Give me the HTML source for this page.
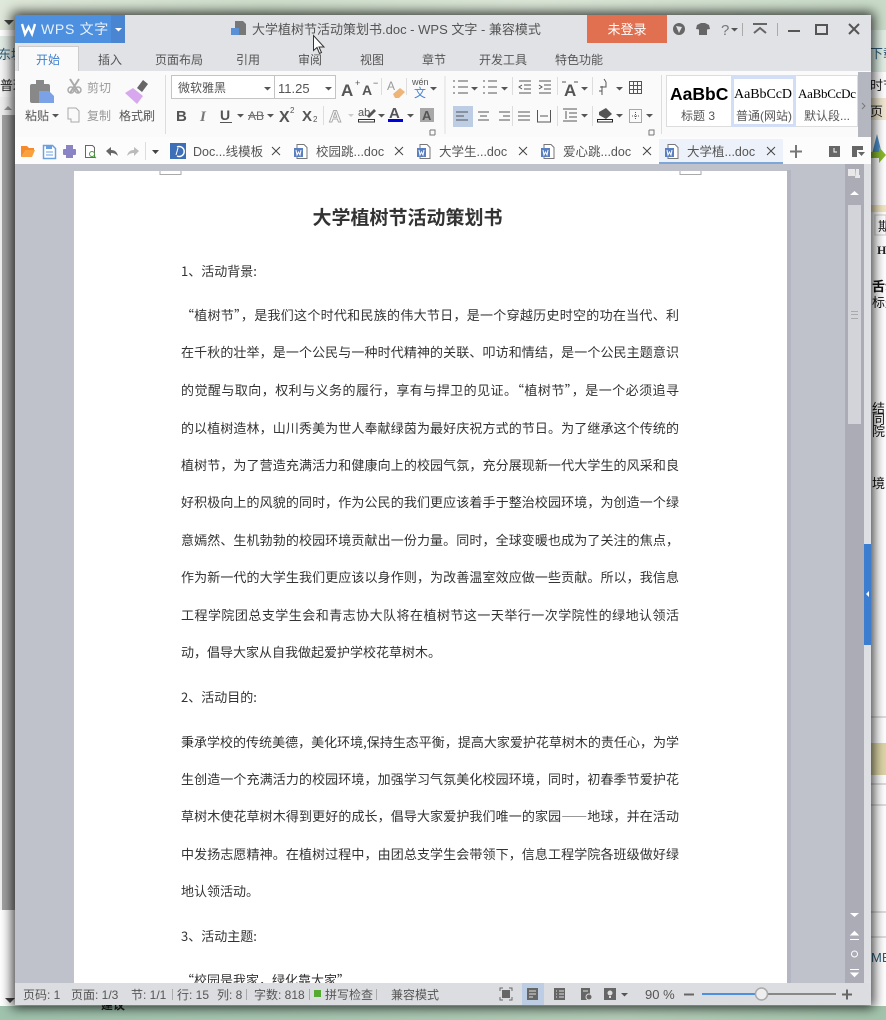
<!DOCTYPE html>
<html lang="zh"><head><meta charset="utf-8"><title>WPS 文字</title>
<style>
html,body{margin:0;padding:0;width:886px;height:1020px;overflow:hidden;background:#fff}
#bg{position:absolute;left:0;top:0;width:886px;height:1020px;overflow:hidden}
#win{position:absolute;left:15px;top:15px;width:856px;height:990px;background:#e1e2e6;box-shadow:0 0 11px 3px rgba(0,0,0,.75)}
svg{position:absolute;left:0;top:0}
text{font-family:"Liberation Sans","Noto Sans CJK SC",sans-serif;fill:#555;font-size:12px}
.b text{fill:#333;font-size:13px;font-family:"Noto Sans CJK SC","Liberation Sans",sans-serif}
.t{font-size:13px}
</style></head><body>
<div id="bg">
<svg width="886" height="1020">
<defs>
<linearGradient id="wt" x1="0" x2="1"><stop offset="0" stop-color="#dfe8da"/><stop offset=".3" stop-color="#cfdfcc"/><stop offset=".6" stop-color="#dce7d8"/><stop offset="1" stop-color="#c9dbc8"/></linearGradient>
<linearGradient id="wb" x1="0" x2="1"><stop offset="0" stop-color="#9fc3ad"/><stop offset=".4" stop-color="#a9c8b2"/><stop offset=".7" stop-color="#b3cdb8"/><stop offset="1" stop-color="#a3c4ac"/></linearGradient>
</defs>
<rect width="886" height="1020" fill="#fff"/>
<rect width="886" height="30" fill="url(#wt)"/>
<rect y="1006" width="886" height="14" fill="url(#wb)"/>
<rect x="0" y="36" width="15" height="25" fill="#e3ebe6"/>
<rect x="0" y="60" width="15" height="37" fill="#f5f5f5"/>
<rect x="0" y="97" width="15" height="813" fill="#f0f0f0"/>
<rect x="2" y="115" width="13" height="795" fill="#a2a2a2"/>
<path d="M4 110l4-4 4 4z" fill="#999"/>
<path d="M4 20h10l-5 5z" fill="#444"/>
<path d="M5 998h10l-5 5z" fill="#444"/>
<text x="-2" y="59" style="fill:#2d5c78;font-size:13px">东坡</text>
<text x="0" y="90" style="fill:#222;font-size:13px">普理</text>
<rect x="871" y="30" width="15" height="42" fill="#dfeee4"/>
<rect x="871" y="98" width="15" height="22" fill="#f1e8d0"/>
<rect x="871" y="205" width="15" height="7" fill="#f1e6c0"/>
<rect x="871" y="743" width="15" height="32" fill="#ddd6a8"/>
<text x="870" y="58" style="fill:#2d5c78;font-size:13px">下载</text>
<text x="870" y="90" style="fill:#222;font-size:13px">时节</text>
<text x="870" y="116" style="fill:#222;font-size:13px">页</text>
<path d="M871 158l6-24 6 24z" fill="#4b8fc9"/><path d="M870 152h9v-5l7 8-7 8v-5h-9z" fill="#8ab92c"/>
<rect x="875" y="215" width="11" height="20" fill="#fff" stroke="#ccc"/>
<text x="878" y="231" style="fill:#222;font-size:13px">期</text>
<text x="877" y="254" style="fill:#222;font-size:12px;font-weight:bold;font-family:'Liberation Serif',serif">H</text>
<g style="font-size:13px"><text x="872" y="291" style="fill:#111;font-size:13px;font-weight:bold">舌动</text><text x="872" y="307" style="fill:#111;font-size:13px">标题</text>
<text x="872" y="413" style="fill:#111;font-size:13px">结</text><text x="872" y="424" style="fill:#111;font-size:13px">同</text><text x="872" y="436" style="fill:#111;font-size:13px">院</text><text x="872" y="488" style="fill:#111;font-size:13px">境，</text><text x="871" y="962" style="fill:#2d5c78;font-size:13px">MB</text></g>
<path d="M871 717h15M871 784h15M871 805h15M871 912h15M871 937h15" stroke="#bbb"/>
<text x="101" y="1009" style="fill:#222;font-size:12px;font-weight:bold">建议</text>
</svg>
<div id="win"></div>
<svg width="886" height="1020">
<defs>
<g id="dc"><path d="M3 .5h7l3 3v11H3z" fill="#fff" stroke="#777"/><rect x="0" y="4" width="9" height="9" fill="#5a7fc0"/><path d="M2 6l1 5 1.500-3L6 11l1-5" stroke="#fff" fill="none"/></g>
<path id="x" d="M0 0l8 8M8 0L0 8" stroke="#444" fill="none"/>
<path id="ar" d="M0 0h7l-3.500 3.500z" fill="#555"/>
</defs>
<!-- title bar -->
<rect x="15" y="15" width="110" height="28" fill="#4d90e0"/><rect x="111" y="15" width="14" height="28" fill="#4a85d2"/>
<path d="M22 24l3 10 3.500-7 3.500 7 3-10" stroke="#fff" stroke-width="2.400" fill="none"/>
<text x="41" y="34" style="fill:#e8f0fb;font-size:14px;letter-spacing:.7px">WPS 文字</text>
<path d="M115 28h7l-3.500 3.500z" fill="#fff"/>
<path d="M235 21h8l3 3v11h-11z" fill="#777"/><rect x="231" y="28" width="8" height="7" fill="#5b8fd6"/>
<text x="252" y="34" class="t" style="font-size:13px;fill:#555">大学植树节活动策划书.doc - WPS 文字 - 兼容模式</text>
<rect x="587" y="15" width="80" height="28" fill="#e07050"/>
<text x="627" y="34" text-anchor="middle" style="fill:#fff;font-size:13px">未登录</text>
<circle cx="679" cy="29" r="6" fill="#666"/><path d="M676 26l6 1-3 6z" fill="#e1e2e6"/>
<path d="M697 25l4-2h4l4 2 1 4-3 .5V35h-8v-5.500L696 29z" fill="#666"/>
<text x="721" y="35" style="font-size:15px;fill:#777">?</text>
<use href="#ar" x="731" y="28"/>
<path d="M742.500 23v13M777.500 23v13" stroke="#aaa"/>
<path d="M753 24h14M754 33l6-5 6 5" stroke="#666" stroke-width="2" fill="none"/>
<path d="M788 31h12" stroke="#555" stroke-width="2"/>
<rect x="816" y="25" width="11" height="9" stroke="#555" stroke-width="2" fill="none"/>
<path d="M849 24l10 10M859 24l-10 10" stroke="#555" stroke-width="2"/>
<!-- tabs -->
<path d="M18.500 71V46.500h60V71" fill="#fafafa" stroke="#ccc"/>
<g text-anchor="middle">
<text x="48" y="64" style="fill:#3e80cc">开始</text>
<text x="110" y="64">插入</text><text x="179" y="64">页面布局</text><text x="248" y="64">引用</text><text x="310" y="64">审阅</text><text x="372" y="64">视图</text><text x="434" y="64">章节</text><text x="503" y="64">开发工具</text><text x="579" y="64">特色功能</text>
</g>
<!-- ribbon -->
<rect x="15" y="71" width="856" height="66" fill="#fafafa"/>
<rect x="15" y="137" width="856" height="27" fill="#fcfcfc"/>
<rect x="30" y="84" width="20" height="19" rx="2" fill="#888"/><rect x="36" y="80" width="8" height="6" fill="#888"/>
<path d="M39 91h10l5 5v7H39z" fill="#7ba2e6"/>
<text x="25" y="120">粘贴</text><use href="#ar" x="52" y="114"/>
<path d="M70 79l9 14M79 79l-9 14" stroke="#aaa" stroke-width="2"/><circle cx="71" cy="90" r="3" fill="none" stroke="#aaa" stroke-width="1.500"/><circle cx="78" cy="90" r="3" fill="none" stroke="#aaa" stroke-width="1.500"/>
<text x="87" y="92" style="fill:#999">剪切</text>
<path d="M68 108h8l3 3v11h-8v-3h-3z" fill="none" stroke="#aaa"/>
<text x="87" y="120" style="fill:#999">复制</text>
<path d="M125 93l12 11 6-8-10-8z" fill="#d8a8ee"/><path d="M137 88l6-8 5 4-6 8z" fill="#666"/>
<text x="119" y="120">格式刷</text>
<path d="M165.500 75v59" stroke="#ddd"/>
<rect x="171.500" y="75.500" width="164" height="23" fill="#fff" stroke="#c4c4c4"/><path d="M274.500 76v22" stroke="#c4c4c4"/>
<text x="178" y="92" style="font-size:12px">微软雅黑</text><use href="#ar" x="264" y="87"/>
<text x="278" y="93" style="font-size:13px;fill:#555">11.25</text><use href="#ar" x="325" y="87"/>
<text x="341" y="96" style="font-size:17px;font-weight:bold">A</text><text x="355" y="86" style="font-size:9px">+</text>
<text x="362" y="95" style="font-size:14px;font-weight:bold">A</text><text x="373" y="86" style="font-size:9px">−</text>
<path d="M381.500 78v17M406.500 78v17M323.500 106v19M445 76v58M512.500 77v18M512.500 106v20M557.500 77v18M557.500 106v20M592.500 77v18M592.500 106v20M661.500 75v59" stroke="#ddd"/>
<text x="387" y="90" style="font-size:12px;fill:#999">A</text><path d="M393 94l7-6 5 4-6 6h-4z" fill="#eeb478"/>
<text x="412" y="85" style="font-size:9px">wén</text><text x="414" y="97" style="font-size:12px;fill:#4a85d2">文</text><use href="#ar" x="430" y="87"/>
<text x="176" y="121" style="font-size:15px;font-weight:bold">B</text>
<text x="200" y="121" style="font-size:15px;font-weight:bold;font-style:italic;fill:#777;font-family:'Liberation Serif',serif">I</text>
<text x="220" y="120" style="font-size:14px;font-weight:bold">U</text><path d="M220 122.500h12" stroke="#555"/><use href="#ar" x="237" y="114"/>
<text x="248" y="120" style="font-size:12px;fill:#666">AB</text><path d="M248 115.500h16" stroke="#d44"/><use href="#ar" x="267" y="114"/>
<text x="279" y="122" style="font-size:16px;font-weight:bold">X</text><text x="290" y="113" style="font-size:8px">2</text>
<text x="302" y="121" style="font-size:15px;font-weight:bold">X</text><text x="313" y="122" style="font-size:8px">2</text>
<text x="329" y="122" style="font-size:17px;font-weight:bold;fill:#fff;stroke:#aaa;stroke-width:1">A</text><path d="M348 114h6l-3 3z" fill="#ccc"/>
<text x="358" y="116" style="font-size:11px">ab</text><path d="M367 116l7-7 2 2-7 7z" fill="#555"/><rect x="358.500" y="119.500" width="16" height="2.500" fill="#fff" stroke="#333"/><use href="#ar" x="378" y="114"/>
<text x="389" y="118" style="font-size:15px;font-weight:bold">A</text><rect x="388" y="119" width="15" height="3" fill="#0000d8"/><use href="#ar" x="407" y="114"/>
<rect x="420" y="108" width="14" height="14" fill="#a8a8a8"/><text x="422" y="120" style="font-size:13px;font-weight:bold;fill:#555">A</text>
<path d="M430 130h5v5M430 130v5h5" stroke="#777" fill="none"/>
<!-- lists -->
<rect x="453" y="106" width="20" height="21" fill="#bccde4"/>
<g stroke="#555" fill="none">
<path d="M453 81h2m3 0h10M453 87h2m3 0h10M453 93h2m3 0h10M483 81h2m3 0h9M483 87h2m3 0h9M483 93h2m3 0h9"/>
<path d="M519 81h12M524 85h7M524 89h7M519 93h12M522 85l-3 2 3 2M539 81h12M544 85h7M544 89h7M539 93h12M539 85l3 2-3 2"/>
<path d="M456 112h12M456 116h8M456 120h12M478 112h11M480 116h7M478 120h11M499 112h11M503 116h7M499 120h11M518 112h12M518 116h12M518 120h12M537.500 110v12M550.500 110v12M540 116h8M537 122h14"/>
<path d="M563 109h14M569 113h8M569 117h8M563 121h14M566 111v8"/>
<path d="M606 82v5h-6M604 79l2 3M602 91h-3M602 86v9"/>
<path d="M629.500 81.500h12v12h-12zM633.500 81.500v12M637.500 81.500v12M629.500 85.500h12M629.500 89.500h12"/>
<path d="M629.500 109.500h12v13h-12zM635.500 112v8M632 116h7" stroke-dasharray="1 1"/>
</g>
<use href="#ar" x="471" y="87"/><use href="#ar" x="501" y="87"/><use href="#ar" x="581" y="87"/><use href="#ar" x="616" y="87"/><use href="#ar" x="581" y="114"/><use href="#ar" x="616" y="114"/><use href="#ar" x="646" y="114"/>
<text x="564" y="96" style="font-size:17px;font-weight:bold">A</text><path d="M562 82l4 0M574 82l4 0" stroke="#555"/>
<path d="M599 112l7-4 6 6-6 5-7-4z" fill="#555"/><rect x="597.500" y="119.500" width="15" height="2.500" fill="#fff" stroke="#222"/>
<path d="M649 130h5v5M649 130v5h5" stroke="#777" fill="none"/>
<!-- gallery -->
<rect x="666.500" y="75.500" width="191" height="51" fill="#fff" stroke="#ddd"/>
<rect x="732.500" y="77.500" width="62" height="48" fill="#fff" stroke="#d2def5" stroke-width="3"/>
<text x="670" y="100" style="font-size:17.500px;font-weight:bold;fill:#000">AaBbC</text>
<text x="698" y="120" text-anchor="middle">标题 3</text>
<text x="734" y="98" style="font-size:14px;fill:#000;font-family:'Liberation Serif',serif" textLength="58">AaBbCcD</text>
<text x="764" y="120" text-anchor="middle">普通(网站)</text>
<text x="798" y="98" style="font-size:13px;fill:#000;font-family:'Liberation Serif',serif" textLength="58">AaBbCcDc</text>
<text x="827" y="120" text-anchor="middle">默认段...</text>
<rect x="858" y="72" width="13" height="65" fill="#b5b7c0"/><path d="M862 103l3 3-3 3" stroke="#777" fill="none"/>
<!-- quick toolbar -->
<path d="M21 146h6l2 2h5v2H26l-5 7z" fill="#f58b2c"/><path d="M26 150h9l-3 7H21z" fill="#f9a13e"/>
<path d="M43.500 145.500h9l3 3v10h-12z" fill="#fff" stroke="#6a9fe0" stroke-width="1.500"/><rect x="46" y="145" width="6" height="4" fill="#6a9fe0"/><path d="M46 152h7M46 155h7" stroke="#6a9fe0"/>
<rect x="63" y="149" width="13" height="6" rx="1" fill="#8a84c4"/><rect x="66" y="145" width="7" height="4" fill="#8a84c4"/><rect x="66" y="155" width="7" height="3" fill="#8a84c4"/>
<path d="M85.500 145.500h7l2 2v10h-9z" fill="#fff" stroke="#666"/><circle cx="92" cy="154" r="2.500" fill="none" stroke="#4a9a40"/><path d="M94 156l2 2" stroke="#4a9a40"/>
<path d="M106 151l5-4v3c4 0 6 2 7 6-2-2-4-3-7-3v3z" fill="#666"/>
<path d="M139 151l-5-4v3c-4 0-6 2-7 6 2-2 4-3 7-3v3z" fill="#bbb"/>
<path d="M145.500 142v18" stroke="#ddd"/><path d="M152 150h7l-3.500 4z" fill="#444"/>
<rect x="170" y="143" width="16" height="16" fill="#3c6fb8"/><path d="M177 147a5 5 0 1 1 0 9" stroke="#fff" stroke-width="1.500" fill="none"/><path d="M178 148l-2 7" stroke="#fff"/>
<text x="193" y="156" style="font-size:12.500px">Doc...线模板</text><use href="#x" x="272" y="147"/>
<use href="#dc" x="294" y="144"/><text x="316" y="156" style="font-size:12.500px">校园跳...doc</text><use href="#x" x="395" y="147"/>
<use href="#dc" x="417" y="144"/><text x="439" y="156" style="font-size:12.500px">大学生...doc</text><use href="#x" x="519" y="147"/>
<use href="#dc" x="541" y="144"/><text x="563" y="156" style="font-size:12.500px">爱心跳...doc</text><use href="#x" x="643" y="147"/>
<rect x="659" y="139" width="124" height="25" fill="#edf2fa"/><rect x="659" y="162" width="124" height="2" fill="#7ea6d8"/>
<use href="#dc" x="665" y="144"/><text x="687" y="156" style="font-size:12.500px">大学植...doc</text><use href="#x" x="767" y="147"/>
<path d="M790 151.500h12M796 145v13" stroke="#777" stroke-width="2" fill="none"/>
<rect x="829" y="146" width="11" height="11" fill="#666"/><path d="M834 148v4h3" stroke="#fff" fill="none"/>
<path d="M852 146h11v4h-6v7h-5z" fill="#666"/><path d="M858 152h7l-3.500 4z" fill="#666"/>
<!-- doc area -->
<rect x="15" y="164" width="849" height="819" fill="#bfc2cb"/>
<rect x="864" y="164" width="7" height="819" fill="#dedfe2"/>
<rect x="864" y="544" width="7" height="101" fill="#3d7dd0"/><path d="M866 594l3-3v6z" fill="#fff"/>
<rect x="787" y="170" width="4" height="813" fill="#b3b6c0"/>
<rect x="845" y="164" width="19" height="819" fill="#abacb6"/>
<rect x="848" y="205" width="13" height="219" fill="#d2d4d9"/>
<path d="M851 311.500h7M851 314.500h7M851 318.500h7" stroke="#aaa"/>
<path d="M848 169h7v7h-7zM856 169h3v6h1v3h-5z" fill="#e8e8e8"/>
<path d="M850 195l4.500-4 4.500 4z" fill="#fff"/>
<path d="M850 913h9l-4.500 4z" fill="#fff"/>
<path d="M851 935l3.500-3.500 3.500 3.500zM850 939.500h9" stroke="#fff" fill="#fff"/>
<circle cx="854.500" cy="954" r="3" fill="none" stroke="#fff"/>
<path d="M851 973l3.500 3.500 3.500-3.500zM850 969.500h9" stroke="#fff" fill="#fff"/>
<!-- page -->
<rect x="74" y="171" width="713" height="812" fill="#fff"/>
<path d="M160 171v3.500h21V171M680 171v3.500h21V171" fill="none" stroke="#aaa"/>
<text x="407.500" y="224" text-anchor="middle" style="font-size:19px;font-weight:bold;fill:#333">大学植树节活动策划书</text>
<g class="b">
<text x="181" y="276">1、活动背景:</text>
<text x="181" y="320" textLength="498">“植树节”，是我们这个时代和民族的伟大节日，是一个穿越历史时空的功在当代、利</text>
<text x="181" y="357" textLength="498">在千秋的壮举，是一个公民与一种时代精神的关联、叩访和情结，是一个公民主题意识</text>
<text x="181" y="395" textLength="498">的觉醒与取向，权利与义务的履行，享有与捍卫的见证。“植树节”，是一个必须追寻</text>
<text x="181" y="433" textLength="498">的以植树造林，山川秀美为世人奉献绿茵为最好庆祝方式的节日。为了继承这个传统的</text>
<text x="181" y="470" textLength="498">植树节，为了营造充满活力和健康向上的校园气氛，充分展现新一代大学生的风采和良</text>
<text x="181" y="507" textLength="498">好积极向上的风貌的同时，作为公民的我们更应该着手于整治校园环境，为创造一个绿</text>
<text x="181" y="545" textLength="498">意嫣然、生机勃勃的校园环境贡献出一份力量。同时，全球变暖也成为了关注的焦点，</text>
<text x="181" y="582" textLength="498">作为新一代的大学生我们更应该以身作则，为改善温室效应做一些贡献。所以，我信息</text>
<text x="181" y="620" textLength="498">工程学院团总支学生会和青志协大队将在植树节这一天举行一次学院性的绿地认领活</text>
<text x="181" y="657">动，倡导大家从自我做起爱护学校花草树木。</text>
<text x="181" y="702">2、活动目的:</text>
<text x="181" y="747" textLength="498">秉承学校的传统美德，美化环境,保持生态平衡，提高大家爱护花草树木的责任心，为学</text>
<text x="181" y="784" textLength="498">生创造一个充满活力的校园环境，加强学习气氛美化校园环境，同时，初春季节爱护花</text>
<text x="181" y="821" textLength="498">草树木使花草树木得到更好的成长，倡导大家爱护我们唯一的家园——地球，并在活动</text>
<text x="181" y="859" textLength="498">中发扬志愿精神。在植树过程中，由团总支学生会带领下，信息工程学院各班级做好绿</text>
<text x="181" y="896">地认领活动。</text>
<text x="181" y="941">3、活动主题:</text>
<text x="181" y="985">“校园是我家，绿化靠大家”</text>
</g>
<!-- status -->
<rect x="15" y="983" width="856" height="22" fill="#dcdde0"/>
<g style="font-size:12px">
<text x="23" y="999">页码: 1</text><text x="71" y="999">页面: 1/3</text><text x="131" y="999">节: 1/1</text><text x="177" y="999">行: 15</text><text x="217" y="999">列: 8</text><text x="254" y="999">字数: 818</text><text x="325" y="999">拼写检查</text><text x="391" y="999">兼容模式</text>
</g>
<path d="M172.500 989v11M246.500 989v11M309.500 989v11M376.500 989v11" stroke="#aaa"/>
<rect x="314" y="990" width="7" height="7" fill="#55aa33"/>
<path d="M500 991v-3h3M509 988h3v3M512 997v3h-3M503 1000h-3v-3" stroke="#666" fill="none"/><rect x="502" y="990" width="8" height="8" fill="#666"/>
<rect x="522" y="983" width="22" height="22" fill="#bccde4"/>
<rect x="527" y="988" width="11" height="12" fill="#666"/><path d="M529 991h7M529 994h7M529 997h4" stroke="#ddd"/>
<rect x="554" y="988" width="11" height="12" fill="#666"/><path d="M556 991h1m2 0h5M556 994h1m2 0h5M556 997h1m2 0h5" stroke="#ddd"/>
<rect x="581" y="988" width="9" height="12" fill="#666"/><path d="M583 991h5" stroke="#ddd"/><circle cx="589" cy="997" r="3" fill="#666" stroke="#ddd"/>
<rect x="604" y="988" width="12" height="12" fill="#666"/><circle cx="610" cy="993" r="2.500" fill="#ddd"/><rect x="609" y="996" width="2" height="2" fill="#ddd"/>
<use href="#ar" x="621" y="993"/>
<text x="645" y="999" style="font-size:13px">90 %</text>
<path d="M684 994.500h10" stroke="#666" stroke-width="2"/>
<rect x="702" y="993" width="134" height="2" fill="#888"/><rect x="702" y="993" width="55" height="2" fill="#4d90e0"/>
<circle cx="761.500" cy="994" r="6" fill="#eee" stroke="#aaa" stroke-width="1.500"/>
<path d="M842 994.500h10M847 989.500v10" stroke="#666" stroke-width="2"/>
<!-- cursor -->
<path d="M313.500 35.500v15l3.500-3 2.500 6 2-1-2.500-5.500h5z" fill="#fff" stroke="#333"/>
</svg>
</div>
</body></html>
